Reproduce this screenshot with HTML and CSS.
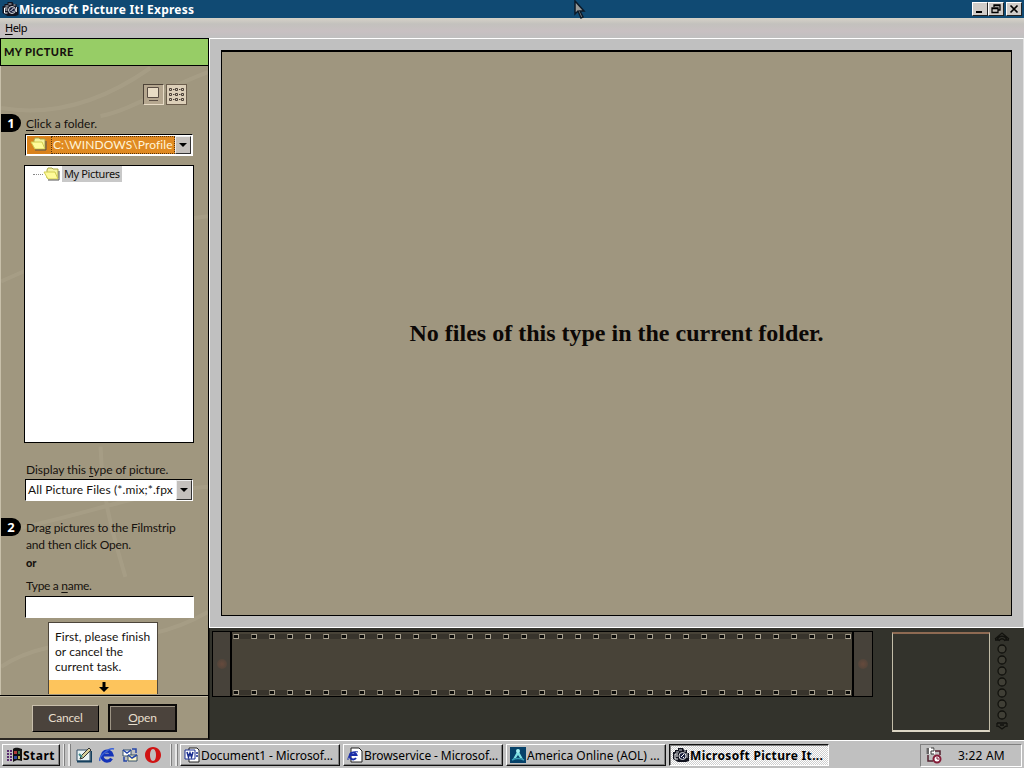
FILE: index.html
```html
<!DOCTYPE html>
<html lang="en">
  <head>
    <meta charset="UTF-8" />
    <meta name="viewport" content="width=device-width, initial-scale=1.0" />
    <title>Microsoft Picture It! Express</title>
    <link rel="stylesheet" href="styles.css">
  </head>
  <body>
    <svg class="defs">
      <defs>
        <symbol id="camera" viewBox="0 0 16 16">
          <path d="M0 5h2V3h3V1h5l1 2h3v3h2v8l-3 1H5l-5-3z" fill="#11131f" />
          <path d="M3 5h3M6 3h3M11 4h2M14 6v5" stroke="#c9ccd0" />
          <path d="M5 7H2v5h3M3 9h2" fill="none" stroke="#fff" />
          <circle cx="9.500" cy="9" r="3.500" fill="#1d2340" stroke="#e0e0e0" />
          <path d="M8 10l3-3M10 11l1-1" fill="none" stroke="#fff" />
        </symbol>
        <symbol id="folder" viewBox="0 0 18 14">
          <path d="M4 3l1-2h4l1 1h5v9H4z" fill="#f5f3a0" stroke="#a8a548" />
          <path d="M1 5h11l3 7H5z" fill="#fffb9a" stroke="#d2cd50" />
          <path d="M5 13h11V4" fill="none" stroke="#555" />
        </symbol>
      </defs>
    </svg>

    <div class="titlebar">
      <svg class="title-icon"><use href="#camera" /></svg>
      <h1>Microsoft Picture It! Express</h1>
      <div class="window-buttons">
        <span class="win-btn"><svg viewBox="0 0 14 12"><path d="M3 9h6" stroke="#000" stroke-width="2" /></svg></span>
        <span class="win-btn"><svg viewBox="0 0 14 12"><path d="M5 4V2h6v5H9M5 2.500h6M3 5h6v4.500H3zM3 5.500h6" fill="none" stroke="#000" stroke-width="1.300" /></svg></span>
        <span class="win-btn close"><svg viewBox="0 0 14 12"><path d="M3.500 2.500l7 7M10.500 2.500l-7 7" stroke="#000" stroke-width="1.700" /></svg></span>
      </div>
    </div>
    <div class="menubar"><span><u>H</u>elp</span></div>

    <div class="main">
      <div class="sidebar">
        <div class="sidebar-title"><span>MY PICTURE</span></div>
        <div class="panel">
          <svg class="swirls" viewBox="0 0 208 628" preserveAspectRatio="none">
            <path d="M0 42C60 52 110 30 150 2M100 50C130 44 160 24 208 6M0 215C60 190 110 160 208 150M100 380C102 430 110 460 125 510M0 465C80 450 140 425 208 420M0 600C60 560 130 590 208 545" />
          </svg>
          <div class="view-buttons">
            <span class="view-btn on"><svg viewBox="0 0 19 19"><path d="M3.500 2.500h11v10h-11z" fill="#e8dcc4" stroke="#5a4e44" /><path d="M5 15.500h9" stroke="#5a4e44" /></svg></span>
            <span class="view-btn">
              <svg viewBox="0 0 19 19">
                <path d="M2.500 3.500h2v2h-2zM8.500 3.500h2v2h-2zM14.500 3.500h2v2h-2zM2.500 8.500h2v2h-2zM8.500 8.500h2v2h-2zM14.500 8.500h2v2h-2zM2.500 13.500h2v2h-2zM8.500 13.500h2v2h-2zM14.500 13.500h2v2h-2z" fill="none" stroke="#4b4038" />
                <path d="M6 4.500h1.500M12 4.500h1.500M6 9.500h1.500M12 9.500h1.500M6 14.500h1.500M12 14.500h1.500" stroke="#4b4038" />
              </svg>
            </span>
          </div>

          <div class="step first">
            <span class="badge">1</span>
            <label><u>C</u>lick a folder.</label>
          </div>
          <div class="combo folder-combo">
            <span class="combo-icon"><svg><use href="#folder" /></svg></span>
            <span class="combo-value selected"><span class="t-path">C:\WINDOWS\Profile</span></span>
            <span class="combo-arrow"></span>
          </div>
          <div class="tree">
            <div class="tree-row">
              <span class="dots"></span>
              <svg><use href="#folder" /></svg>
              <span class="tree-label">My Pictures</span>
            </div>
          </div>

          <label class="type-label">Display this <u>t</u>ype of picture.</label>
          <div class="combo type-combo">
            <span class="combo-value"><span class="t-files">All Picture Files (*.mix;*.fpx</span></span>
            <span class="combo-arrow"></span>
          </div>

          <div class="step second">
            <span class="badge">2</span>
            <p>Drag pictures to the Filmstrip<br>and then click Open.</p>
          </div>
          <b class="or">or</b>
          <label class="name-label">Type a <u>n</u>ame.</label>
          <div class="name-input"></div>

          <div class="hint">
            <p>First, please finish<br>or cancel the<br>current task.</p>
            <div class="hint-foot"><svg viewBox="0 0 12 12"><path d="M4.500 1h3v5H11L6 11 1 6h3.500z" /></svg></div>
          </div>
        </div>
        <div class="actions">
          <span class="action">Cancel</span>
          <span class="action default"><u>O</u>pen</span>
        </div>
      </div>

      <div class="work">
        <div class="canvas-frame">
          <div class="canvas"><span>No files of this type in the current folder.</span></div>
        </div>
        <div class="tray">
          <div class="filmstrip">
            <div class="film-end"><i></i></div>
            <div class="film">
              <div class="holes" id="holesTop"></div>
              <div class="holes" id="holesBottom"></div>
            </div>
            <div class="film-end right"><i></i></div>
          </div>
          <div class="preview"></div>
          <svg class="reel" viewBox="0 0 16 100">
            <path d="M1 8l7-6 7 6M3 9c2-5 8-5 10 0M5 10c1-3 5-3 6 0M1 9h4M11 9h4" />
            <circle cx="8" cy="18" r="4" /><circle cx="8" cy="29" r="4" /><circle cx="8" cy="40" r="4" />
            <circle cx="8" cy="51" r="4" /><circle cx="8" cy="62" r="4" /><circle cx="8" cy="73" r="4" />
            <circle cx="8" cy="84" r="4" />
            <path d="M3 92h10M4 95l4 3 4-3M3 92v4M13 92v4M6 94h4" />
          </svg>
        </div>
      </div>
    </div>

    <div class="taskbar">
      <div class="start">
        <svg viewBox="0 0 17 16">
          <path d="M7 2c3-2 5-1 9 0v12c-4-1-6-1-9 1z" fill="#111" />
          <path d="M8 4h3v3H8z" fill="#b33a3a" /><path d="M12 4h2v3h-2z" fill="#3a7a4a" />
          <path d="M8 9h3v3H8z" fill="#3048a0" /><path d="M12 9h2v3h-2z" fill="#b8a850" />
          <path d="M1 4h5M1 7h5M1 10h5M1 13h5" stroke="#5a2a70" stroke-width="2" stroke-dasharray="2 1" />
        </svg>
        <span>Start</span>
      </div>
      <span class="grip"></span>
      <div class="quick">
        <svg viewBox="0 0 16 16"><path d="M1 3h13v11H1z" fill="#e8f2f4" stroke="#35506a" /><path d="M1 14.500h14.500V4" fill="none" stroke="#16405e" stroke-width="2" /><path d="M4 12l1-3 8-8 2 2-8 8z" fill="#d8cf9a" stroke="#333" /><path d="M3 7l3 3" stroke="#3a8a8a" stroke-width="2" /></svg>
        <svg viewBox="0 0 16 16"><path d="M12.500 11.500A5 5 0 1 1 13 8H4" fill="none" stroke="#1433b8" stroke-width="3.200" /><path d="M1 14C-1 10 10 0 15 2" fill="none" stroke="#3860d8" stroke-width="1.500" /></svg>
        <svg viewBox="0 0 16 16"><path d="M1 3h8v6H1z" fill="#fff" stroke="#35506a" /><path d="M6 8h9v6H6z" fill="#fff8c8" stroke="#35506a" /><path d="M1 3l4 3 4-3M6 8l4 3 5-3M10 2h4v4M2 10v4h3" fill="none" stroke="#2546a8" stroke-width="1.500" /></svg>
        <svg viewBox="0 0 16 16"><path fill-rule="evenodd" d="M8 0C3 0 0 4 0 8s3 8 8 8 8-4 8-8-3-8-8-8zm0 2c2 0 3 3 3 6s-1 6-3 6-3-3-3-6 1-6 3-6z" fill="#d01414" /></svg>
      </div>
      <span class="grip wide"></span>
      <div class="tasks">
        <div class="task">
          <svg viewBox="0 0 16 16"><path d="M5 1h8l2 2v12H5z" fill="#fff" stroke="#222" /><path d="M1 3h10v9H1z" fill="#fff" stroke="#1b2f90" /><path d="M3 5l1.500 5L6 6l1.500 4L9 5M12 6h2M12 9h2" fill="none" stroke="#1b2f90" stroke-width="1.600" /></svg>
          <span class="t-doc">Document1 - Microsof...</span>
        </div>
        <div class="task">
          <svg viewBox="0 0 16 16"><path d="M4 1h8l3 3v11H4z" fill="#fff" stroke="#222" /><path d="M9 11A3.500 3.500 0 1 1 9.500 8H3" fill="none" stroke="#1b2fa8" stroke-width="2" /><path d="M1 13C0 9 7 3 11 5" fill="none" stroke="#1b2fa8" /></svg>
          <span class="t-brow">Browservice - Microsof...</span>
        </div>
        <div class="task">
          <svg viewBox="0 0 16 16"><path d="M0 0h16v16H0z" fill="#06426a" /><path d="M8 3l5 9-3-1-2-3-2 3-3 1z" fill="#7ee0e4" /><circle cx="8" cy="4" r="2" fill="#a5f0f0" /><path d="M2 13c4-2 8-2 12 0" fill="none" stroke="#38a0b8" stroke-width="1.500" /></svg>
          <span>America Online (AOL) ...</span>
        </div>
        <div class="task active">
          <svg><use href="#camera" /></svg>
          <span class="t-pic">Microsoft Picture It...</span>
        </div>
      </div>
      <div class="clock">
        <svg viewBox="0 0 17 17"><path d="M1 1h9v6H1z" fill="#fff" /><path d="M1 2h3M1 4h3M1 6h3M3 1v6M6 1h3v3H6v3h3" fill="none" stroke="#333" /><path d="M3 8v6h5M10 4h5v4" fill="none" stroke="#51202e" stroke-width="1.500" /><circle cx="12" cy="12" r="3.500" fill="#fff" stroke="#841c38" stroke-width="2" /><path d="M12 10v2h2" fill="none" stroke="#841c38" /></svg>
        <span>3:22 AM</span>
      </div>
    </div>

    <svg class="cursor" viewBox="0 0 12 20"><path d="M1 1v13l3-3 3 7 2-1-3-6h4z" fill="#9a9a98" stroke="#0c1a28" stroke-width="1.500" /></svg>

    <script>
      // Sprocket holes along both edges of the film
      ["holesTop", "holesBottom"].forEach((id) => {
        const row = document.getElementById(id);
        for (let i = 0; i < 35; i++) {
          row.appendChild(document.createElement("i"));
        }
      });
    </script>
  </body>
</html>
```

FILE: styles.css
```css
* {
  box-sizing: border-box;
}
body {
  margin: 0;
  width: 1024px;
  height: 768px;
  overflow: hidden;
  display: flex;
  flex-direction: column;
  background: #c0c0c0;
  font-family: "Noto Sans", "Open Sans", sans-serif;
  font-size: 12px;
  color: #000;
}
svg {
  display: block;
  flex: none;
}
p {
  margin: 0;
}
.defs {
  position: absolute;
  width: 0;
  height: 0;
}
u {
  text-underline-offset: 2px;
}

/* Title and menu */
.titlebar {
  flex: none;
  height: 18px;
  display: flex;
  align-items: center;
  background: #104a73;
  color: #fff;
  padding: 0 2px;
}
.title-icon {
  width: 17px;
  height: 16px;
}
h1 {
  margin: 0;
  flex: 1;
  font-size: 12px;
  line-height: 19px;
  font-weight: bold;
  letter-spacing: 0.26px;
}
.window-buttons {
  display: flex;
}
.win-btn {
  width: 16px;
  height: 14px;
  background: #d0ccc8;
  border: 1px solid;
  border-color: #fff #222 #222 #fff;
}
.win-btn.close {
  margin-left: 2px;
}
.win-btn svg {
  width: 14px;
  height: 12px;
}
.menubar {
  flex: none;
  height: 20px;
  padding-left: 5px;
  font-size: 11px;
  letter-spacing: -0.5px;
  line-height: 20px;
  background: linear-gradient(#d6d2c8, #c3c1bd 30%, #c8c0c2 65%, #c0c0c0);
}

/* Sidebar */
.main {
  flex: none;
  height: 702px;
  display: flex;
}
.sidebar {
  flex: none;
  width: 209px;
  display: flex;
  flex-direction: column;
  border-right: 1px solid #000;
  border-bottom: 2px solid #2c2823;
  background: #a0977f;
  font-family: "Lato", sans-serif;
  line-height: 14px;
  color: #16120e;
}
.sidebar-title {
  flex: none;
  height: 28px;
  border: 1px solid #000;
  border-right: 0;
  background: #97cd66;
  padding-left: 3px;
  line-height: 26px;
  font-weight: 900;
  font-size: 11px;
  letter-spacing: 0.4px;
}
.panel {
  position: relative;
  height: 629px;
  display: flex;
  flex-direction: column;
  align-items: flex-start;
  padding-left: 25px;
  border-left: 1px solid #c8c0aa;
}
.panel > * {
  flex: none;
}
.swirls {
  position: absolute;
  left: 0;
  top: 0;
  width: 207px;
  height: 629px;
  fill: none;
  stroke: #b0a890;
  stroke-width: 4;
  opacity: 0.4;
}
.panel > :not(.swirls) {
  position: relative;
}
.view-buttons {
  display: flex;
  gap: 2px;
  margin: 18px 0 0 117px;
}
.view-btn {
  width: 21px;
  height: 21px;
  border: 1px solid #6b5d4c;
  background: #dccfb8;
}
.view-btn.on {
  background: #b5a78f;
  border-color: #4e4438 #e8dcc6 #e8dcc6 #4e4438;
}
.view-btn svg {
  width: 19px;
  height: 19px;
}
.step {
  display: flex;
  margin-left: -25px;
}
.step.first {
  margin-top: 9px;
  height: 19px;
  line-height: 20px;
}
.badge {
  width: 20px;
  height: 18px;
  margin-right: 5px;
  border-radius: 0 9px 9px 0;
  background: #000;
  color: #fff;
  font: bold 13px/18px "Noto Sans", sans-serif;
  text-align: center;
}
.combo {
  width: 168px;
  height: 22px;
  display: flex;
  margin-left: -1px;
  border: 1px solid;
  border-color: #000 #fff #fff #000;
  background: #fff;
  overflow: hidden;
}
.folder-combo {
  margin-top: 1px;
  padding: 1px;
}
.combo-icon {
  width: 24px;
  padding: 1px 0 0 3px;
  background: #d9821c;
}
.combo-icon svg {
  width: 18px;
  height: 14px;
}
.combo-value {
  flex: 1;
  overflow: hidden;
  white-space: nowrap;
  line-height: 19px;
  padding-left: 2px;
}
.combo-value.selected {
  background: #e08a22;
  color: #fff4d8;
  border: 1px dotted #5a3208;
  line-height: 16px;
  padding-left: 1px;
}
.t-path {
  letter-spacing: 0.1px;
}
.t-files {
  letter-spacing: 0.1px;
}
.combo-arrow {
  flex: none;
  width: 16px;
  display: flex;
  align-items: center;
  justify-content: center;
  background: #c4c0bc;
  border: 1px solid;
  border-color: #eee #333 #333 #eee;
}
.combo-arrow::after {
  content: "";
  border: 4px solid transparent;
  border-top-color: #000;
  border-bottom: 0;
}
.tree {
  width: 170px;
  height: 278px;
  margin: 9px 0 0 -2px;
  border: 1px solid #000;
  background: #fff;
}
.tree-row {
  display: flex;
  align-items: center;
  height: 16px;
  padding-left: 8px;
}
.dots {
  width: 10px;
  border-top: 1px dotted #888;
}
.tree-row svg {
  width: 18px;
  height: 14px;
}
.tree-label {
  width: 60px;
  margin-left: 1px;
  padding: 0 2px;
  height: 16px;
  font: 11px/16px "Noto Sans", sans-serif;
  letter-spacing: -0.38px;
  white-space: nowrap;
  background: #c8c8c8;
}
.type-label {
  margin-top: 20px;
  letter-spacing: -0.04px;
}
.type-combo {
  margin-top: 2px;
}
.step.second {
  margin-top: 17px;
  line-height: 17px;
  letter-spacing: -0.15px;
}
.step.second p {
  padding-top: 1px;
}
.or {
  margin-top: 3px;
  line-height: 14px;
  font-size: 11px;
  font-weight: 900;
}
.name-label {
  margin-top: 9px;
  letter-spacing: -0.3px;
}
.name-input {
  width: 169px;
  height: 22px;
  margin: 3px 0 0 -1px;
  border: 1px solid;
  border-color: #000 #fff #fff #000;
  background: #fff;
}
.hint {
  width: 110px;
  height: 72px;
  margin: 4px 0 0 22px;
  border: 1px solid #4c453a;
  border-bottom: 0;
  background: #fff;
  line-height: 15px;
}
.hint p {
  height: 57px;
  padding: 6px 0 0 6px;
  letter-spacing: 0.05px;
  white-space: nowrap;
}
.hint-foot {
  height: 14px;
  background: #fdc45c;
  display: flex;
  justify-content: center;
  align-items: center;
}
.hint-foot svg {
  width: 12px;
  height: 12px;
  margin-left: 2px;
}
.actions {
  flex: 1;
  display: flex;
  align-items: flex-start;
  gap: 9px;
  padding: 7px 0 0 32px;
  border-top: 1px solid #000;
  box-shadow: inset 0 1px #c2b9a2;
}
.action {
  width: 67px;
  height: 27px;
  margin-top: 2px;
  border: 1px solid;
  border-color: #c9bfab #000 #000 #c9bfab;
  background: #4b433c;
  color: #e8dfcd;
  line-height: 24px;
  text-align: center;
  letter-spacing: -0.2px;
}
.action.default {
  width: 69px;
  height: 28px;
  margin-top: 1px;
  border: 2px solid #0c0a08;
  box-shadow: inset 1px 1px #9d9484;
}

/* Work area */
.work {
  flex: 1;
  display: flex;
  flex-direction: column;
}
.canvas-frame {
  height: 590px;
  padding: 11px;
  background: #c0c0c0;
  border: 1px solid #fff;
  border-right-color: #e0e0e0;
}
.canvas {
  height: 566px;
  width: 791px;
  display: flex;
  align-items: center;
  justify-content: center;
  border: 2px solid #000;
  border-left-width: 1px;
  border-right-width: 1px;
  border-bottom-width: 1px;
  background: #9f967f;
  font: bold 24px "Liberation Serif", serif;
  color: #0c0806;
}
.tray {
  flex: 1;
  display: flex;
  align-items: flex-start;
  padding: 3px 0 0 3px;
  background: #33332c;
  border-left: 1px solid #1c1c18;
}
.filmstrip {
  flex: none;
  display: flex;
  width: 661px;
  height: 66px;
  margin-left: -1px;
  border: 1px solid #000;
  background: #484338;
}
.film-end {
  width: 17px;
  display: flex;
  align-items: center;
  justify-content: center;
  background: #47423a;
}
.film-end.right {
  width: 18px;
}
.film-end i {
  width: 10px;
  height: 10px;
  border-radius: 5px;
  background: radial-gradient(#664a3c, #4a4239);
}
.film {
  flex: 1;
  display: flex;
  flex-direction: column;
  justify-content: space-between;
  padding: 2px 0 1px;
  border: solid #000;
  border-width: 0 2px;
}
.holes {
  display: flex;
  gap: 12px;
  height: 5px;
  padding-left: 1px;
  background: #38342c;
  overflow: hidden;
}
.holes i {
  flex: none;
  width: 6px;
  height: 5px;
  border: 1px solid #a8a190;
  border-left-color: #6e685a;
  background: #0c0c0a;
}
.preview {
  flex: none;
  width: 98px;
  height: 100px;
  margin: 1px 0 0 19px;
  border: 1px solid #c3bda8;
  border-top: 2px solid #8e6a52;
  border-bottom: 2px solid #dcd6c4;
}
.reel {
  width: 16px;
  height: 100px;
  margin-left: 4px;
  fill: none;
  stroke: #12120e;
  stroke-width: 1.3;
}
.reel circle {
  fill: #403f36;
}

/* Taskbar */
.taskbar {
  flex: none;
  height: 28px;
  display: flex;
  align-items: flex-start;
  padding: 3px 2px 0;
  border-top: 1px solid #fff;
  background: #c0c0c0;
}
.start,
.task {
  display: flex;
  align-items: center;
  height: 22px;
  border: 1px solid;
  border-color: #fff #111 #111 #fff;
  box-shadow: inset -1px -1px #808080;
  white-space: nowrap;
}
.start {
  width: 58px;
  padding-left: 3px;
  font-weight: bold;
  letter-spacing: 0.5px;
}
.start svg {
  width: 17px;
  height: 16px;
}
.grip {
  flex: none;
  width: 7px;
  height: 22px;
  margin-left: 3px;
  border: solid #e8e8e8;
  border-width: 0 2px 0 1px;
  box-shadow: 1px 0 #808080, inset 1px 0 #808080;
}
.quick {
  display: flex;
  gap: 7px;
  margin: 3px 0 0 6px;
}
.quick svg {
  width: 16px;
  height: 16px;
}
.grip.wide {
  margin-left: 9px;
}
.tasks {
  display: flex;
  gap: 3px;
  margin-left: 3px;
}
.task {
  width: 160px;
  padding-left: 3px;
}
.task svg {
  width: 16px;
  height: 16px;
  margin-right: 1px;
}
.t-doc,
.t-brow {
  letter-spacing: -0.1px;
}
.task.active {
  border-color: #111 #fff #fff #111;
  box-shadow: inset 1px 1px #808080;
  background: repeating-conic-gradient(#fff 0 25%, #cfcfcf 0 50%) 0 0 / 2px 2px;
  font-weight: bold;
}
.t-pic {
  letter-spacing: 0.32px;
}
.clock {
  width: 102px;
  height: 23px;
  margin-left: auto;
  display: flex;
  align-items: center;
  padding-left: 4px;
  border: 1px solid;
  border-color: #808080 #fff #fff #808080;
}
.clock svg {
  width: 17px;
  height: 17px;
}
.clock span {
  margin-left: 16px;
  letter-spacing: 0.2px;
}
.cursor {
  position: absolute;
  left: 574px;
  top: 0;
  width: 12px;
  height: 20px;
}
```
